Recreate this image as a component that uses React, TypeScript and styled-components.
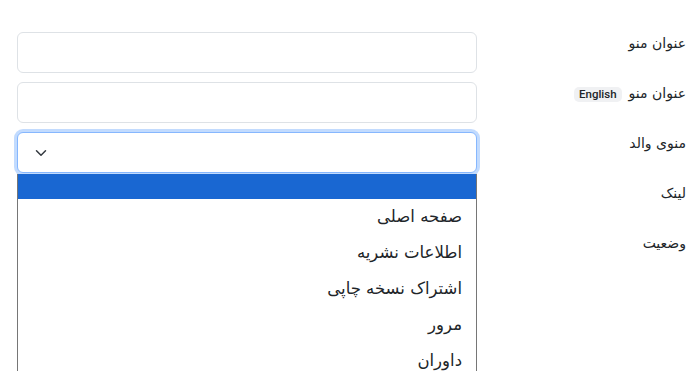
import React from "react";
import styled, { createGlobalStyle } from "styled-components";

const Global = createGlobalStyle`
  html, body { margin: 0; padding: 0; background: #fff; overflow: hidden; }
  body { font-family: "DejaVu Sans", "Noto Sans", sans-serif; color: #212529; }
`;

const Page = styled.div`
  direction: rtl;
  position: relative;
  padding: 32px 12px 0 17px;
  width: 698px;
  box-sizing: border-box;
  height: 371px;
  overflow: hidden;
`;

const Row = styled.div`
  display: grid;
  grid-template-columns: 209px 460px;
  height: 41px;
  margin-bottom: 9px;
`;

const Label = styled.label`
  font-size: 14px;
  line-height: 21px;
  padding-top: 1px;
  display: flex;
  align-items: flex-start;
  gap: 7px;
  color: #212529;
`;

const Badge = styled.span`
  direction: ltr;
  font-family: "Roboto", "Liberation Sans", sans-serif;
  font-weight: 500;
  font-size: 11.5px;
  line-height: 15px;
  background: #f0f1f3;
  color: #212529;
  border-radius: 5px;
  padding: 0 5px;
  margin-top: 4px;
`;

const Input = styled.div<{ $focus?: boolean }>`
  box-sizing: border-box;
  height: 41px;
  border: 1px solid ${(p) => (p.$focus ? "#86b7fe" : "#dee2e6")};
  border-radius: 6px;
  background: #fff;
  box-shadow: ${(p) => (p.$focus ? "0 0 0 3px rgba(13,110,253,0.25)" : "none")};
  display: flex;
  align-items: center;
  justify-content: flex-end;
  padding-left: 15px;
`;

const Dropdown = styled.div`
  position: absolute;
  left: 17px;
  top: 174px;
  width: 460px;
  height: 197px;
  overflow: hidden;
  box-sizing: border-box;
  border-left: 1px solid #767676;
  border-right: 1px solid #767676;
  background: #fff;
  font-family: "DejaVu Sans", sans-serif;
`;

const Option = styled.div<{ $active?: boolean; $h: number }>`
  height: ${(p) => p.$h}px;
  line-height: ${(p) => p.$h}px;
  background: ${(p) => (p.$active ? "#1967d2" : "transparent")};
  color: #212529;
  font-size: 16.5px;
  padding-right: 14px;
  white-space: nowrap;
`;

const Chevron = () => (
  <svg width="16" height="12" viewBox="0 0 16 16" fill="none">
    <path d="M2 5l6 6 6-6" stroke="#343a40" strokeWidth="2" strokeLinecap="round" strokeLinejoin="round" />
  </svg>
);

export default function App() {
  const options = ["صفحه اصلی", "اطلاعات نشریه", "اشتراک نسخه چاپی", "مرور", "داوران"];
  return (
    <>
      <Global />
      <Page>
        <Row>
          <Label>عنوان منو</Label>
          <Input />
        </Row>
        <Row>
          <Label>
            عنوان منو <Badge>English</Badge>
          </Label>
          <Input />
        </Row>
        <Row>
          <Label>منوی والد</Label>
          <Input $focus>
            <Chevron />
          </Input>
        </Row>
        <Row>
          <Label>لینک</Label>
          <Input />
        </Row>
        <Row>
          <Label>وضعیت</Label>
          <Input />
        </Row>
        <Dropdown>
          <Option $active $h={25} />
          {options.map((o) => (
            <Option key={o} $h={36}>
              {o}
            </Option>
          ))}
        </Dropdown>
      </Page>
    </>
  );
}
